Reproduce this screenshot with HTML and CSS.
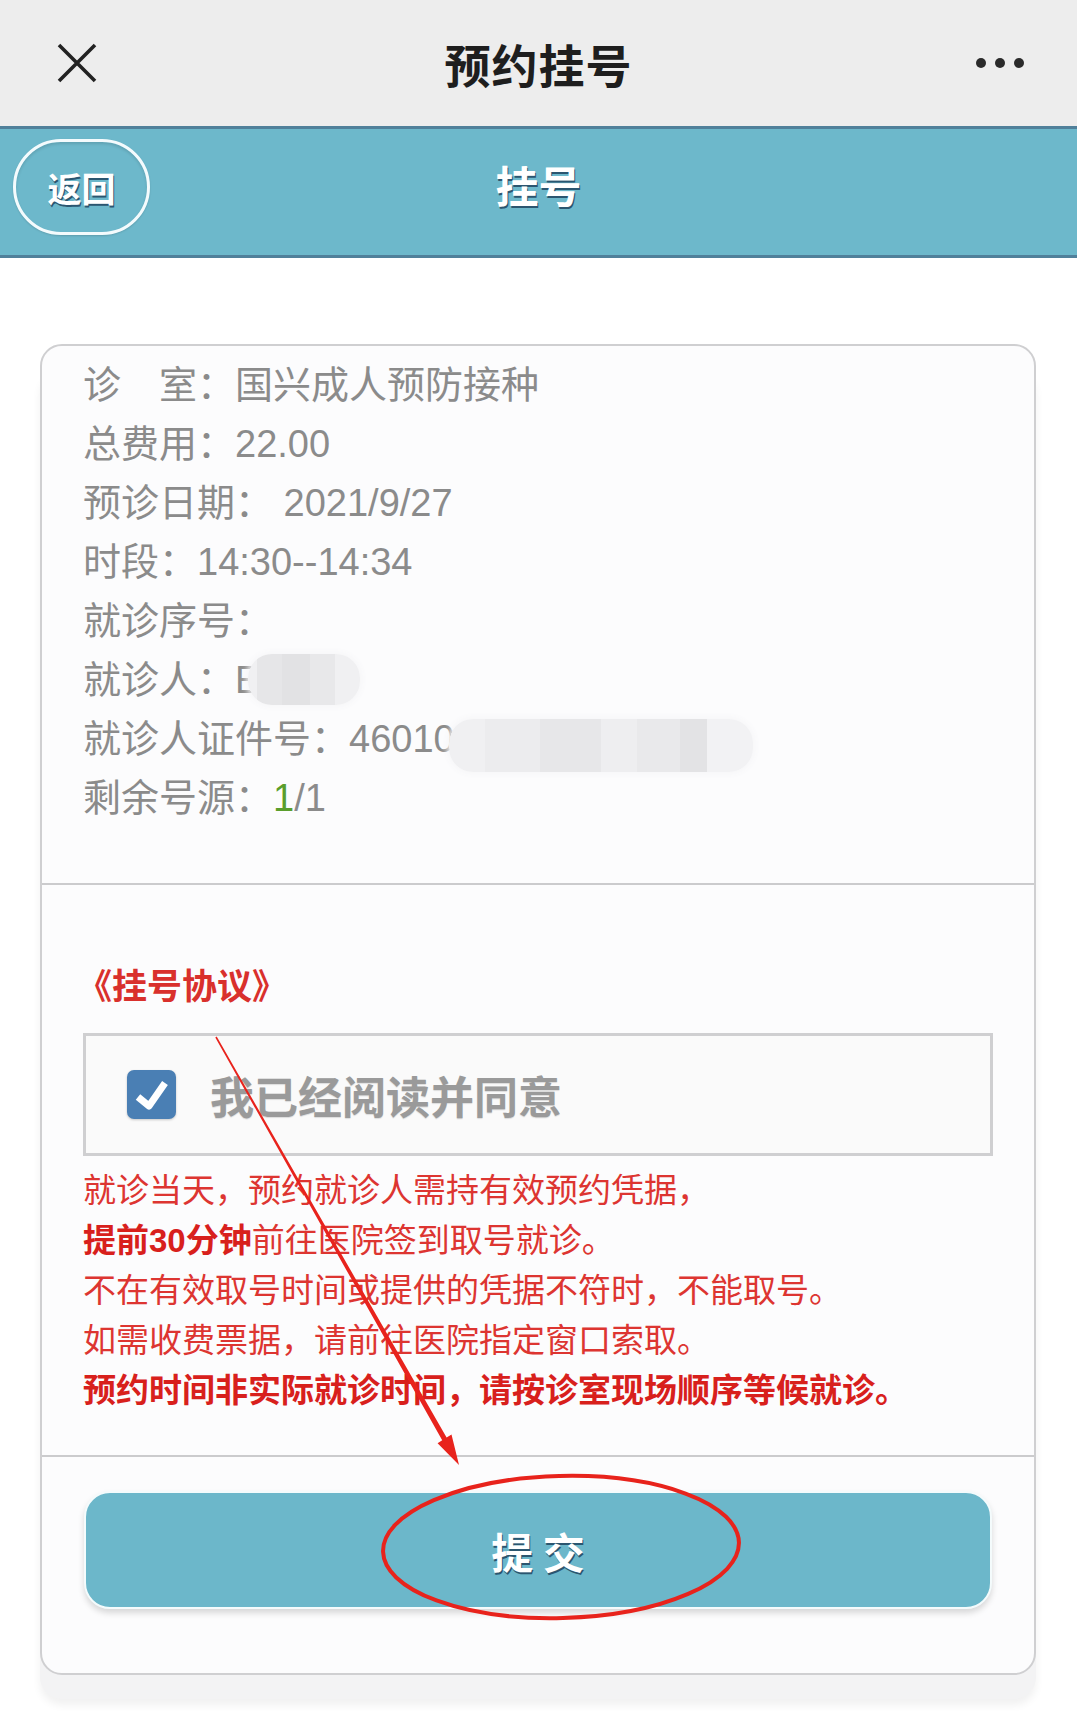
FILE: index.html
```html
<!DOCTYPE html>
<html lang="zh-CN">
<head>
  <meta charset="UTF-8" />
  <meta name="viewport" content="width=device-width, initial-scale=1" />
  <title>预约挂号</title>
  <link rel="stylesheet" href="styles.css">
</head>
<body>

  <!-- 微信顶部栏 -->
  <div class="topbar">
    <span class="topbar-close">
      <svg width="40" height="40" viewBox="0 0 40 40">
        <path d="M2 2 L38 38 M38 2 L2 38" stroke="#222" stroke-width="3.6" fill="none" />
      </svg>
    </span>
    <h1 class="topbar-title">预约挂号</h1>
    <span class="topbar-more"><i></i><i></i><i></i></span>
  </div>

  <!-- 页面标题 -->
  <header class="pagehead">
    <div class="pagehead-left">
      <a class="back-btn" href="#">返回</a>
    </div>
    <h2 class="pagehead-title">挂号</h2>
    <div></div>
  </header>

  <main class="content">
    <div class="card">
      <section class="info">
        <div class="info-row">诊　室：国兴成人预防接种</div>
        <div class="info-row">总费用：22.00</div>
        <div class="info-row">预诊日期： 2021/9/27</div>
        <div class="info-row">时段：14:30--14:34</div>
        <div class="info-row">就诊序号：</div>
        <div class="info-row">就诊人：E<span class="mask mask-name"></span></div>
        <div class="info-row">就诊人证件号：46010<span class="mask mask-id"></span></div>
        <div class="info-row">剩余号源：<span class="num-left">1</span>/1</div>
      </section>

      <section class="agree">
        <div class="protocol">《挂号协议》</div>
        <label class="agree-box">
          <span class="checkbox">
            <svg width="49" height="49" viewBox="0 0 49 49">
              <rect x="0" y="0" width="49" height="49" rx="7" fill="#4a7fb4" />
              <path d="M11 27 L22 36 L38 13" stroke="#fff" stroke-width="7" fill="none" stroke-linejoin="round" />
            </svg>
          </span>
          <span class="agree-text">我已经阅读并同意</span>
        </label>
        <div class="notes">
          <p>就诊当天，预约就诊人需持有效预约凭据，</p>
          <p><b>提前30分钟</b>前往医院签到取号就诊。</p>
          <p>不在有效取号时间或提供的凭据不符时，不能取号。</p>
          <p>如需收费票据，请前往医院指定窗口索取。</p>
          <p><b>预约时间非实际就诊时间，请按诊室现场顺序等候就诊。</b></p>
        </div>
      </section>

      <div class="actions">
        <button class="submit-btn" type="button">提 交</button>
      </div>
    </div>
  </main>

  <!-- 红色标注 -->
  <svg class="annotate" width="1077" height="1715" viewBox="0 0 1077 1715">
    <polygon points="215.3,1037.4 216.7,1036.6 446.6,1437.6 451.5,1434.6 459,1465 437.6,1443.2 442.2,1440.2" fill="#e8231c" />
    <ellipse cx="561" cy="1547" rx="178" ry="71" fill="none" stroke="#e8231c" stroke-width="4" transform="rotate(-1.5 561 1547)" />
  </svg>

</body>
</html>
```

FILE: styles.css
```css
body {
  margin: 0;
  background: #fff;
  font-family: "Liberation Sans", "Noto Sans CJK SC", sans-serif;
  position: relative;
  min-height: 1715px;
}

/* 微信顶部栏 */
.topbar {
  height: 126px;
  background: #ededed;
  display: grid;
  grid-template-columns: 1fr auto 1fr;
  align-items: center;
}

.topbar-close {
  padding-left: 57px;
  display: flex;
  align-items: center;
}

.topbar-title {
  margin: 0;
  font-size: 46px;
  font-weight: 700;
  color: #1e1e1e;
  letter-spacing: 1px;
}

.topbar-more {
  justify-self: end;
  padding-right: 53px;
  display: flex;
  gap: 9px;
}

.topbar-more i {
  width: 10px;
  height: 10px;
  border-radius: 50%;
  background: #2a2a2a;
}

/* 页面标题 */
.pagehead {
  height: 124px;
  background: #6db8cb;
  border-top: 3px solid #50809a;
  border-bottom: 3px solid #50809a;
  display: grid;
  grid-template-columns: 1fr auto 1fr;
  align-items: center;
  padding-bottom: 2px;
  box-sizing: content-box;
}

.pagehead-left {
  padding-left: 13px;
}

.back-btn {
  display: flex;
  justify-content: center;
  align-items: center;
  width: 131px;
  height: 90px;
  border: 3px solid #f4fbfd;
  border-radius: 48px;
  color: #fff;
  font-size: 34px;
  font-weight: 700;
  text-decoration: none;
  text-shadow: 1px 2px 0 #2b5670;
  box-shadow: inset 0 2px 3px rgba(0, 0, 0, 0.12), 0 1px 2px rgba(0, 0, 0, 0.15);
  margin-top: -8px;
}

.pagehead-title {
  margin: -14px 0 0;
  color: #fff;
  font-size: 43px;
  font-weight: 700;
  text-shadow: 1px 2px 0 #2b5670;
}

/* 内容卡片 */
.content {
  padding: 86px 41px 0 40px;
}

.card {
  background: #fcfcfd;
  border: 2px solid #cfcfd1;
  border-radius: 22px;
  box-shadow: 0 24px 0 0 #f3f3f4, 0 30px 8px rgba(0, 0, 0, 0.06);
}

.info {
  padding: 10px 43px 55px 41px;
}

.info-row {
  font-size: 38px;
  line-height: 59px;
  height: 59px;
  color: #8b8b8b;
  white-space: nowrap;
}

.num-left {
  color: #5a9e2c;
}

.mask {
  display: inline-block;
  vertical-align: middle;
  border-radius: 24px;
  box-shadow: 0 0 6px 2px #f6f6f8;
}

.mask-name {
  width: 112px;
  height: 51px;
  margin: -6px 0 0 -12px;
  background: linear-gradient(90deg, #f0f0f2 0 8%, #e6e6e8 8% 30%, #e2e2e4 30% 55%, #e8e8ea 55% 78%, #f0f0f2 78%);
}

.mask-id {
  width: 304px;
  height: 53px;
  margin: 8px 0 0 -6px;
  background: linear-gradient(90deg, #f0f0f2 0 12%, #ececee 12% 30%, #e7e7e9 30% 50%, #eeeef0 50% 62%, #e9e9eb 62% 76%, #e3e3e5 76% 85%, #f2f2f4 85%);
}

.agree {
  border-top: 2px solid #cbcbcd;
  padding: 77px 41px 39px 41px;
}

.protocol {
  font-size: 35px;
  line-height: 50px;
  font-weight: 700;
  color: #d9302c;
  margin-left: -6px;
}

.agree-box {
  margin-top: 21px;
  height: 117px;
  border: 3px solid #cfcfd1;
  background: #fafafa;
  display: flex;
  align-items: center;
  padding-left: 41px;
  gap: 34px;
}

.checkbox {
  display: flex;
  filter: drop-shadow(0 1px 1px rgba(0, 0, 0, 0.2));
}

.agree-text {
  font-size: 44px;
  font-weight: 700;
  color: #9a9a9a;
  text-shadow: 0 1px 1px rgba(0, 0, 0, 0.12);
}

.notes {
  margin-top: 10px;
}

.notes p {
  margin: 0;
  font-size: 33px;
  line-height: 50px;
  color: #dd3531;
  white-space: nowrap;
}

.notes b {
  font-weight: 700;
  color: #d8201c;
}

.actions {
  border-top: 2px solid #cbcbcd;
  padding: 34px 42px 64px 42px;
}

.submit-btn {
  display: block;
  width: 100%;
  height: 118px;
  background: #6cb7ca;
  border: 2px solid #f4fbfc;
  border-radius: 26px;
  color: #fff;
  font-family: "Noto Sans CJK SC", sans-serif;
  font-size: 42px;
  font-weight: 700;
  text-shadow: 1px 2px 0 #2b5670;
  box-shadow: 0 4px 6px rgba(0, 0, 0, 0.15);
  cursor: pointer;
}

/* 红色标注层 */
.annotate {
  position: absolute;
  left: 0;
  top: 0;
  pointer-events: none;
}
```
